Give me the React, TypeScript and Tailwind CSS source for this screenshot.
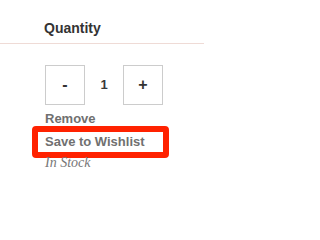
export default function App() {
  return (
    <div className="w-[204px] h-[201px] bg-white font-['Liberation_Sans',Arial,sans-serif] overflow-hidden">
      <div className="h-[43px] pt-[20px] pl-[44px] text-[14px] leading-[16px] font-bold text-[#333333]">
        Quantity
      </div>
      <div className="h-px bg-[#efdbd6]" />

      <div className="pl-[45px]">
        <div className="mt-[21px] flex items-center">
          <button className="w-[40px] h-[40px] border border-[#cccccc] flex items-center justify-center text-[16px] font-bold text-[#333333]">
            -
          </button>
          <span className="w-[38px] text-center text-[13px] font-bold text-[#3a3a3a]">1</span>
          <button className="w-[40px] h-[40px] border border-[#cccccc] flex items-center justify-center text-[16px] font-bold text-[#333333]">
            +
          </button>
        </div>

        <div className="mt-[6px] text-[13px] leading-[16px] font-bold text-[#707070]">Remove</div>
        <div className="mt-[-1px] ml-[-13px] w-[137px] border-[6px] border-[#ff2200] rounded-[4px] pl-[7px] py-[2px] text-[13px] leading-[16px] font-bold text-[#707070]">
          Save to Wishlist
        </div>
        <div className="mt-[-3px] font-['Liberation_Serif',serif] italic text-[14px] leading-[16px] text-[#777777]">
          In Stock
        </div>
      </div>
    </div>
  )
}
